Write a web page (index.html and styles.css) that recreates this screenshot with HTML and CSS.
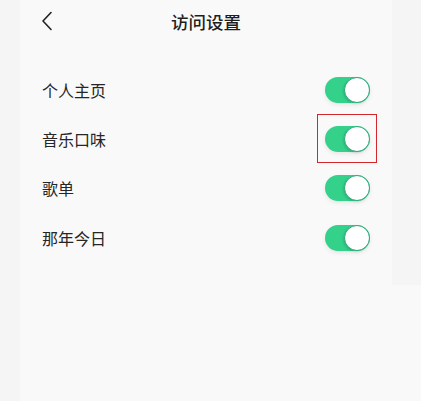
FILE: index.html
```html
<!DOCTYPE html>
<html lang="zh">
<head>
<meta charset="utf-8">
<link rel="stylesheet" href="styles.css">
</head>
<body>
<div class="page">
  <div class="gutter-left"></div>
  <main class="content">
    <header class="header">
      <svg class="back" width="12" height="20" viewBox="0 0 12 20"><path d="M10 1.5 L2 10 L10 18.5" fill="none" stroke="#222" stroke-width="1.6" stroke-linecap="round" stroke-linejoin="round"/></svg>
      <h1 class="title">访问设置</h1>
    </header>
    <ul class="list">
      <li class="row"><span class="label">个人主页</span><span class="switch"><span class="knob"></span></span></li>
      <li class="row"><span class="label">音乐口味</span><span class="switch highlight"><span class="knob"></span></span></li>
      <li class="row"><span class="label">歌单</span><span class="switch"><span class="knob"></span></span></li>
      <li class="row"><span class="label">那年今日</span><span class="switch"><span class="knob"></span></span></li>
    </ul>
  </main>
  <div class="gutter-right"><div class="gutter-right-top"></div></div>
</div>
</body>
</html>
```
FILE: styles.css
```css
html, body {
  margin: 0;
  padding: 0;
  background: #f9f9f9;
}
body {
  font-family: "Noto Sans CJK SC", "Noto Sans", sans-serif;
  color: #222;
}
.page {
  display: flex;
  width: 421px;
  height: 401px;
  overflow: hidden;
}
.gutter-left {
  width: 20px;
  flex: none;
  background: #f5f5f5;
}
.content {
  flex: 1;
  background: #f9f9f9;
}
.gutter-right {
  width: 29px;
  flex: none;
}
.gutter-right-top {
  height: 285px;
  background: #f5f5f5;
}
.header {
  position: relative;
  height: 42px;
  display: flex;
  align-items: center;
  justify-content: center;
}
.back {
  position: absolute;
  left: 21px;
  top: 11px;
}
.title {
  margin: 0;
  font-size: 17.5px;
  font-weight: 500;
  color: #1e1e1e;
}
.list {
  list-style: none;
  margin: 23px 0 0;
  padding: 0 22px;
}
.row {
  height: 49.3px;
  display: flex;
  align-items: center;
  justify-content: space-between;
}
.label {
  font-size: 16px;
  color: #262626;
}
.switch {
  position: relative;
  width: 45px;
  height: 26px;
  border-radius: 13px;
  background: #33d18a;
  box-shadow: 0 2px 4px rgba(0, 0, 0, 0.08);
}
.knob {
  position: absolute;
  right: 0;
  top: 0;
  width: 24px;
  height: 24px;
  border-radius: 50%;
  background: #fff;
  border: 1px solid #2aa877;
  box-shadow: -1px 1px 2px rgba(0, 0, 0, 0.12);
}
.highlight::after {
  content: "";
  position: absolute;
  left: -8px;
  right: -7px;
  top: -12px;
  bottom: -11px;
  border: 1px solid #d4262c;
}
```
